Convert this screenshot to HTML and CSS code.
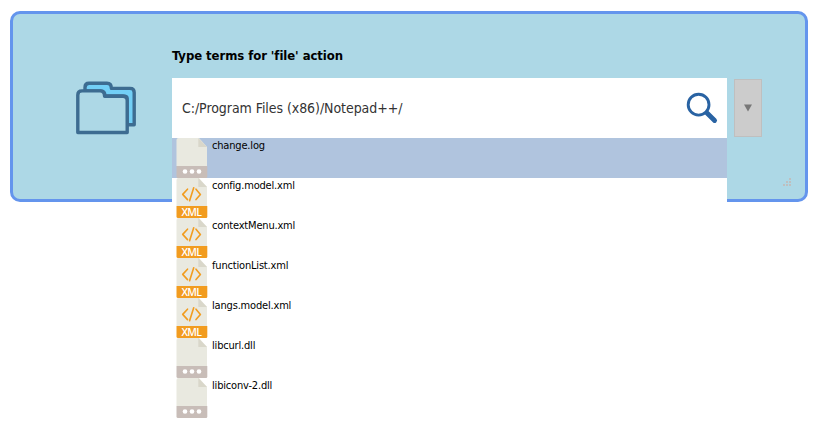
FILE: index.html
```html
<!DOCTYPE html>
<html lang="en">
<head>
<meta charset="utf-8">
<title>File action</title>
<link rel="stylesheet" href="styles.css">
</head>
<body>
<svg class="defs" aria-hidden="true">
  <symbol id="sheet" viewBox="0 0 32 40">
    <path d="M2.5 0H23L31 9V28H.5V2Q.5 0 2.5 0Z" fill="#e9e9e0"/>
    <path d="M22.3 0L31 9H22.3Z" fill="#d9d7ca"/>
  </symbol>
  <symbol id="generic" viewBox="0 0 32 40">
    <use href="#sheet"/>
    <path d="M.5 28H31.3V38.5Q31.3 40 30 40H2Q.5 40 .5 38.5Z" fill="#c8bdb8"/>
    <g fill="#fff"><circle cx="9" cy="33.5" r="2.3"/><circle cx="16" cy="33.5" r="2.3"/><circle cx="23" cy="33.5" r="2.3"/></g>
  </symbol>
  <symbol id="xml" viewBox="0 0 32 40">
    <use href="#sheet"/>
    <path d="M11.5 11.2L6.7 16.4L11.5 21.6M20 11.2L24.4 16.4L20 21.6M17.7 9.8L13.6 22.7" fill="none" stroke="#f29c1f" stroke-width="1.6" stroke-linecap="round" stroke-linejoin="round"/>
    <path d="M.5 28H31.3V38.5Q31.3 40 30 40H2Q.5 40 .5 38.5Z" fill="#f29c1f"/>
  </symbol>
</svg>
<main class="panel">
  <svg class="folder" viewBox="0 0 60 60" fill="none" stroke="#3d6c91" stroke-width="3.4" stroke-linejoin="round">
    <path d="M9 12V7.500Q9 3.300 13 3.300H31Q35.400 3.300 35.400 8.400H54Q58.200 8.400 58.200 12.400V44.700H51V18Q51 16 47 16H29Q29 11 25 11H9Z" fill="#72cff6"/>
    <path d="M1.800 52.500V15Q1.800 10.900 6 10.900H24Q28.600 10.900 28.600 16.200H47Q51.200 16.200 51.200 20.500V52.500Z" fill="#add8e6"/>
  </svg>
  <section class="content">
    <h1 class="title">Type terms for 'file' action</h1>
    <div class="controls">
      <div class="field">
        <span class="path">C:/Program Files (x86)/Notepad++/</span>
        <svg class="search" viewBox="0 0 32 32" fill="none" stroke="#2963a3">
          <circle cx="12.600" cy="12.700" r="10.400" stroke-width="2.900"/>
          <path d="M21 21L28.600 28.500" stroke-width="4.800" stroke-linecap="round"/>
          <path d="M19.500 19.500L22 22" stroke-width="3.600"/>
        </svg>
        <ul class="menu">
          <li class="item selected"><svg class="icon"><use href="#generic"/></svg><span>change.log</span></li>
          <li class="item"><svg class="icon"><use href="#xml"/><text class="tag" x="5.500" y="37.800" textLength="20.500">XML</text></svg><span>config.model.xml</span></li>
          <li class="item"><svg class="icon"><use href="#xml"/><text class="tag" x="5.500" y="37.800" textLength="20.500">XML</text></svg><span>contextMenu.xml</span></li>
          <li class="item"><svg class="icon"><use href="#xml"/><text class="tag" x="5.500" y="37.800" textLength="20.500">XML</text></svg><span>functionList.xml</span></li>
          <li class="item"><svg class="icon"><use href="#xml"/><text class="tag" x="5.500" y="37.800" textLength="20.500">XML</text></svg><span>langs.model.xml</span></li>
          <li class="item"><svg class="icon"><use href="#generic"/></svg><span>libcurl.dll</span></li>
          <li class="item"><svg class="icon"><use href="#generic"/></svg><span>libiconv-2.dll</span></li>
        </ul>
      </div>
      <button class="toggle" aria-label="Show list"><svg viewBox="0 0 8 8"><path d="M0 .5H8L4 7.500Z" fill="#777"/></svg></button>
    </div>
  </section>
  <svg class="grip" viewBox="0 0 8 8" fill="#bfbfbf"><path d="M6 0h2v2H6zM3 3h2v2H3zM6 3h2v2H6zM0 6h2v2H0zM3 6h2v2H3zM6 6h2v2H6z"/></svg>
</main>
</body>
</html>
```
FILE: styles.css
```css
* { box-sizing: border-box; }
body {
  margin: 0;
  padding: 11px 13px 0 10px;
  height: 430px;
  overflow: hidden;
  background: #fff;
  color: #000;
  font-family: "DejaVu Sans Condensed", "DejaVu Sans", sans-serif;
  font-stretch: condensed;
}
.defs { position: absolute; width: 0; height: 0; }
.panel {
  position: relative;
  display: flex;
  width: 798px;
  height: 191px;
  padding: 33px 0 0 63px;
  border: 3px solid #6495ed;
  border-radius: 10px;
  background: #add8e6;
}
.folder { width: 60px; height: 60px; margin-top: 33px; margin-right: 36px; }
.title { margin: 0; height: 31px; font-size: 13px; line-height: 18px; letter-spacing: -0.07px; white-space: nowrap; }
.controls { display: flex; align-items: center; gap: 7px; }
.field {
  position: relative;
  display: flex;
  align-items: center;
  justify-content: space-between;
  width: 555px;
  height: 60px;
  padding: 0 9px 0 10px;
  background: #fff;
}
.path { color: #333; font-size: 14px; letter-spacing: -0.06px; white-space: nowrap; }
.search { width: 32px; height: 32px; }
.toggle {
  display: flex;
  align-items: center;
  justify-content: center;
  width: 28px;
  height: 58px;
  padding: 0;
  border: 1px solid #bfbfbf;
  background: #ccc;
}
.toggle svg { width: 8px; height: 8px; }
.menu {
  position: absolute;
  top: 60px;
  left: 0;
  width: 555px;
  margin: 0;
  padding: 0;
  list-style: none;
  background: #fff;
}
.item { display: flex; height: 40px; padding-left: 4px; font-size: 11px; line-height: 15px; letter-spacing: -0.18px; }
.item span { margin-left: 4px; white-space: nowrap; }
.selected { background: #b0c4de; }
.icon { width: 32px; height: 40px; }
.tag { fill: #fff; font: 600 10.5px "Open Sans", sans-serif; letter-spacing: 0; }
.grip { position: absolute; right: 14px; bottom: 13px; width: 8px; height: 8px; }
```
